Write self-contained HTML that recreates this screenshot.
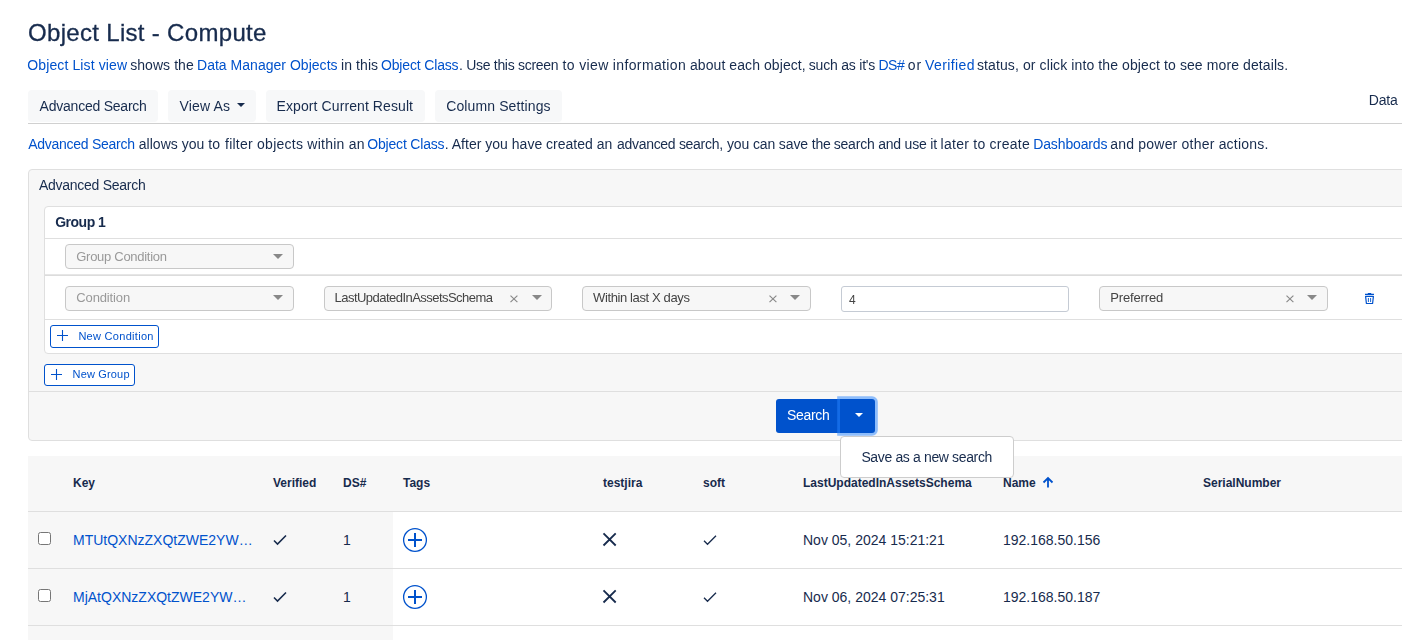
<!DOCTYPE html>
<html lang="en">
<head>
<meta charset="utf-8">
<title>Object List - Compute</title>
<style>
*{box-sizing:border-box}
html,body{margin:0;padding:0;background:#fff}
body{width:1402px;height:640px;overflow:hidden;position:relative;font-family:"Liberation Sans",sans-serif;color:#172b4d;font-size:14px}
a{color:#0052cc;text-decoration:none}
#w{position:absolute;left:0;top:0;width:1402px;height:640px;overflow:hidden;will-change:transform}
.abs{position:absolute;white-space:nowrap}
.t{position:absolute;white-space:nowrap;font-size:14px;line-height:20px;color:#172b4d}
.t.st{font-size:13px;color:#444}
.t.st.ph{color:#999}
.t.bt{font-size:11px;line-height:16px;color:#0052cc}
.tab{position:absolute;top:90px;height:32px;background:#f7f8f9;border-radius:4px}
.caret{position:absolute;width:0;height:0;border-left:4px solid transparent;border-right:4px solid transparent;border-top:4px solid #172b4d}
.tabline{position:absolute;left:28px;top:123px;width:1374px;height:1px;background:#d0d0d0}
.card{position:absolute;left:28px;top:169px;width:1380px;height:272px;border:1px solid #dfdfdf;border-radius:4px;background:#f7f7f7}
.group{position:absolute;left:44px;top:206px;width:1370px;height:148px;border:1px solid #dfdfdf;border-radius:4px;background:#fff}
.hl{position:absolute;left:45px;width:1360px;height:1px;background:#dfdfdf}
.sel{position:absolute;height:25px;width:228.6px;border:1px solid #c8c8c8;border-radius:4px;background:#f7f7f7}
.sel .arr{position:absolute;right:9.6px;top:8px;width:0;height:0;border-left:5px solid transparent;border-right:5px solid transparent;border-top:5px solid #888}
.inp{position:absolute;height:26px;width:228.5px;border:1px solid #c5cbd4;border-radius:3px;background:#fff}
.obtn{position:absolute;border:1px solid #0052cc;border-radius:3px;background:#fff}
.footer{position:absolute;left:29px;top:391px;width:1380px;height:1px;background:#dfdfdf}
.sbtn{position:absolute;left:776px;top:399px;width:64px;height:34px;background:#0052cc;border-radius:3px 0 0 3px}
.sdd{position:absolute;left:840px;top:399px;width:35px;height:34px;background:#0052cc;border-radius:0 3px 3px 0;box-shadow:0 0 0 2.8px rgba(38,132,255,.5)}
.menu{position:absolute;left:840px;top:435.6px;width:174px;height:42.4px;background:#fff;border:1px solid #cdcdcd;border-radius:4px;z-index:5}
.thead{position:absolute;left:28px;top:456px;width:1374px;height:56px;background:#f7f7f7;border-bottom:1px solid #dfdfdf}
.th{position:absolute;top:476px;font-weight:700;font-size:12px;line-height:14px;color:#172b4d;white-space:nowrap}
.row{position:absolute;left:28px;width:1374px;height:57px;border-bottom:1px solid #dfdfdf;background:#fff}
.row .fix{position:absolute;left:0;top:0;width:365px;height:56px;background:#f7f7f7}
.td{position:absolute;font-size:14px;line-height:16px;white-space:nowrap;color:#172b4d}
a.td{color:#0052cc}
.cb{position:absolute;left:10px;width:13px;height:13px;margin:0;padding:0}
</style>
</head>
<body>
<div class="thead"></div>
<div class="th" style="left:73px">Key</div>
<div class="th" style="left:273px">Verified</div>
<div class="th" style="left:343px">DS#</div>
<div class="th" style="left:403px">Tags</div>
<div class="th" style="left:603px">testjira</div>
<div class="th" style="left:703px">soft</div>
<div class="th" style="left:803px">LastUpdatedInAssetsSchema</div>
<div class="th" style="left:1003px">Name</div>
<svg class="abs" style="left:1041px;top:475px" width="14" height="14" viewBox="0 0 14 14"><path d="M7 12.5V3.2M2.5 7.5L7 3L11.5 7.5" fill="none" stroke="#0052cc" stroke-width="1.8"/></svg>
<div class="th" style="left:1203px">SerialNumber</div>

<div class="row" style="top:512px"><div class="fix"></div>
  <input type="checkbox" class="cb" style="top:20px">
</div>
<a class="td" style="left:73px;top:532px">MTUtQXNzZXQtZWE2YW…</a>
<svg class="abs" style="left:268px;top:530px" width="24" height="20" viewBox="0 0 24 20"><polyline points="6,10.5 9.5,14 18,5.5" fill="none" stroke="#172b4d" stroke-width="1.6"/></svg>
<div class="td" style="left:343px;top:532px">1</div>
<svg class="abs" style="left:402px;top:527px" width="26" height="26" viewBox="0 0 26 26"><circle cx="13" cy="13" r="11.4" fill="none" stroke="#0052cc" stroke-width="1.3"/><path d="M6 13H20M13 6V20" stroke="#0052cc" stroke-width="2" fill="none"/></svg>
<svg class="abs" style="left:600px;top:530px" width="20" height="20" viewBox="0 0 20 20"><path d="M3.5 3.3L15.7 15.5M15.7 3.3L3.5 15.5" stroke="#172b4d" stroke-width="1.85" fill="none"/></svg>
<svg class="abs" style="left:698px;top:530px" width="24" height="20" viewBox="0 0 24 20"><polyline points="6,10.8 9.5,14.3 18,5.8" fill="none" stroke="#172b4d" stroke-width="1.3"/></svg>
<div class="td" style="left:803px;top:532px">Nov 05, 2024 15:21:21</div>
<div class="td" style="left:1003px;top:532px">192.168.50.156</div>
<div class="row" style="top:569px"><div class="fix"></div>
  <input type="checkbox" class="cb" style="top:20px">
</div>
<a class="td" style="left:73px;top:589px">MjAtQXNzZXQtZWE2YW…</a>
<svg class="abs" style="left:268px;top:587px" width="24" height="20" viewBox="0 0 24 20"><polyline points="6,10.5 9.5,14 18,5.5" fill="none" stroke="#172b4d" stroke-width="1.6"/></svg>
<div class="td" style="left:343px;top:589px">1</div>
<svg class="abs" style="left:402px;top:584px" width="26" height="26" viewBox="0 0 26 26"><circle cx="13" cy="13" r="11.4" fill="none" stroke="#0052cc" stroke-width="1.3"/><path d="M6 13H20M13 6V20" stroke="#0052cc" stroke-width="2" fill="none"/></svg>
<svg class="abs" style="left:600px;top:587px" width="20" height="20" viewBox="0 0 20 20"><path d="M3.5 3.3L15.7 15.5M15.7 3.3L3.5 15.5" stroke="#172b4d" stroke-width="1.85" fill="none"/></svg>
<svg class="abs" style="left:698px;top:587px" width="24" height="20" viewBox="0 0 24 20"><polyline points="6,10.8 9.5,14.3 18,5.8" fill="none" stroke="#172b4d" stroke-width="1.3"/></svg>
<div class="td" style="left:803px;top:589px">Nov 06, 2024 07:25:31</div>
<div class="td" style="left:1003px;top:589px">192.168.50.187</div>
<div class="row" style="top:626px"><div class="fix"></div></div>
<div id="w">
<div class="t" style="left:28px;top:17.5px;font-size:24px;line-height:30px;letter-spacing:.315px;-webkit-text-stroke:.3px #172b4d">Object List - Compute</div>

<div class="t" style="top:55px;left:27.25px;letter-spacing:.117px"><a>Object List view</a></div>
<div class="t" style="top:55px;left:130.2px;letter-spacing:.062px">shows the</div>
<div class="t" style="top:55px;left:197px;letter-spacing:.026px"><a>Data Manager Objects</a></div>
<div class="t" style="top:55px;left:341px;letter-spacing:.083px">in this</div>
<div class="t" style="top:55px;left:381px;letter-spacing:-.159px"><a>Object Class</a></div>
<div class="t" style="top:55px;left:459px;letter-spacing:-.297px">. Use this screen</div>
<div class="t" style="top:55px;left:562.5px;letter-spacing:.361px">to view information</div>
<div class="t" style="top:55px;left:690px;letter-spacing:.074px">about each object,</div>
<div class="t" style="top:55px;left:808.75px;letter-spacing:-.205px">such as it's</div>
<div class="t" style="top:55px;left:878.5px;letter-spacing:-.5px"><a>DS#</a></div>
<div class="t" style="top:55px;left:907.75px;letter-spacing:1px">or</div>
<div class="t" style="top:55px;left:925px;letter-spacing:.393px"><a>Verified</a></div>
<div class="t" style="top:55px;left:977px;letter-spacing:.102px">status, or click into the object to see more details.</div>

<div class="tab" style="left:28px;width:130px"></div>
<div class="tab" style="left:168px;width:88.4px"></div>
<div class="tab" style="left:266.4px;width:158.4px"></div>
<div class="tab" style="left:435px;width:126.8px"></div>
<div class="t" style="top:96px;left:39.6px;letter-spacing:-.229px">Advanced Search</div>
<div class="t" style="top:96px;left:179.6px;letter-spacing:.133px">View As</div>
<div class="caret" style="left:237px;top:103px"></div>
<div class="t" style="top:96px;left:276.6px;letter-spacing:.09px">Export Current Result</div>
<div class="t" style="top:96px;left:446.2px;letter-spacing:.121px">Column Settings</div>
<div class="t" style="top:90px;left:1368.7px;letter-spacing:-.167px">Data</div>
<div class="tabline"></div>

<div class="t" style="top:134px;left:28.25px;letter-spacing:-.268px"><a>Advanced Search</a></div>
<div class="t" style="top:134px;left:138.75px;letter-spacing:.021px">allows you to</div>
<div class="t" style="top:134px;left:225px;letter-spacing:.25px">filter objects within an</div>
<div class="t" style="top:134px;left:367.25px;letter-spacing:-.182px"><a>Object Class</a></div>
<div class="t" style="top:134px;left:444.75px;letter-spacing:.01px">. After you have created an</div>
<div class="t" style="top:134px;left:617px;letter-spacing:-.3px">advanced search,</div>
<div class="t" style="top:134px;left:727px;letter-spacing:-.133px">you can save the</div>
<div class="t" style="top:134px;left:833.75px;letter-spacing:-0.209px">search and use it</div>
<div class="t" style="top:134px;left:940.6px;letter-spacing:0.257px">later to create</div>
<div class="t" style="top:134px;left:1033.25px;letter-spacing:-.139px"><a>Dashboards</a></div>
<div class="t" style="top:134px;left:1110.25px;letter-spacing:.207px">and power other actions.</div>

<div class="card"></div>
<div class="footer"></div>
<div class="t" style="top:175px;left:39px;letter-spacing:-.271px">Advanced Search</div>
<div class="group"></div>
<div class="t" style="top:212px;left:55.2px;letter-spacing:-.5px;font-weight:700">Group 1</div>
<div class="hl" style="top:238px"></div>
<div class="hl" style="top:274px;background:#e6e6e6"></div>
<div class="hl" style="top:275px;background:#dcdcdc"></div>
<div class="hl" style="top:319px"></div>

<div class="sel" style="left:65px;top:244px"><span class="arr" style="top:9px"></span></div>
<div class="sel" style="left:65px;top:286px"><span class="arr"></span></div>
<div class="sel" style="left:323.6px;top:286px"><span class="arr"></span></div>
<div class="sel" style="left:582.2px;top:286px"><span class="arr"></span></div>
<div class="inp" style="left:840.8px;top:286px"></div>
<div class="sel" style="left:1099.4px;top:286px"><span class="arr"></span></div>
<div class="t st ph" style="top:246.5px;left:76.3px;letter-spacing:-.289px">Group Condition</div>
<div class="t st ph" style="top:288px;left:76.3px;letter-spacing:-.131px">Condition</div>
<div class="t st" style="top:288px;left:334.6px;letter-spacing:-.538px">LastUpdatedInAssetsSchema</div>
<div class="t st" style="top:288px;left:593px;letter-spacing:-.376px">Within last X days</div>
<div class="t st" style="top:288px;left:1110.3px;letter-spacing:-.162px">Preferred</div>
<div class="t" style="top:290px;left:849px;font-size:12px;color:#444">4</div>
<svg class="abs" style="left:509.3px;top:293.7px" width="10" height="10" viewBox="0 0 10 10"><path d="M1.5 1.6L8.4 8.2M8.4 1.6L1.5 8.2" stroke="#888" stroke-width="1.15" fill="none"/></svg>
<svg class="abs" style="left:767.9px;top:293.7px" width="10" height="10" viewBox="0 0 10 10"><path d="M1.5 1.6L8.4 8.2M8.4 1.6L1.5 8.2" stroke="#888" stroke-width="1.15" fill="none"/></svg>
<svg class="abs" style="left:1285.1px;top:293.7px" width="10" height="10" viewBox="0 0 10 10"><path d="M1.5 1.6L8.4 8.2M8.4 1.6L1.5 8.2" stroke="#888" stroke-width="1.15" fill="none"/></svg>
<svg class="abs" style="left:1362px;top:290px" width="16" height="16" viewBox="0 0 16 16"><path d="M3 4.4H12M5.8 3.6H9.2" stroke="#0052cc" stroke-width="1.4" fill="none"/><path d="M3.6 6.4H11.4L10.6 13.5H4.4Z" stroke="#0052cc" stroke-width="1.2" fill="none" stroke-linejoin="round"/><path d="M6.4 8V12M8.6 8V12" stroke="#0052cc" stroke-width="0.9" fill="none"/></svg>

<div class="obtn" style="left:50px;top:325px;width:109px;height:23px"></div>
<svg class="abs" style="left:56px;top:329px" width="13" height="13" viewBox="0 0 13 13"><path d="M1 6.5H12M6.5 1V12" stroke="#0052cc" stroke-width="1.1" fill="none"/></svg>
<div class="t bt" style="top:328px;left:78.4px;letter-spacing:.29px">New Condition</div>
<div class="obtn" style="left:44px;top:364px;width:91px;height:22px"></div>
<svg class="abs" style="left:50px;top:368px" width="13" height="13" viewBox="0 0 13 13"><path d="M1 6.5H12M6.5 1V12" stroke="#0052cc" stroke-width="1.1" fill="none"/></svg>
<div class="t bt" style="top:366px;left:72.6px;letter-spacing:.16px">New Group</div>

<div class="sbtn"></div>
<div class="sdd"></div>
<div class="t" style="top:404.5px;left:787px;letter-spacing:-.32px;color:#fff">Search</div>
<div class="caret" style="left:855px;top:413px;border-top-color:#fff"></div>
<div class="menu"></div>
<div class="t" style="top:447px;left:861.4px;letter-spacing:-.358px;z-index:6">Save as a new search</div>

</div>
</body>
</html>
